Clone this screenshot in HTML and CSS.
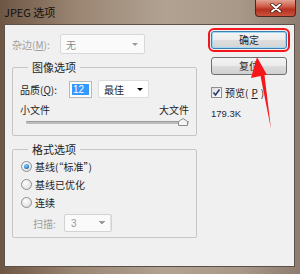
FILE: index.html
```html
<!DOCTYPE html>
<html lang="zh-CN">
<head>
    <meta charset="UTF-8">
    <meta name="viewport" content="width=device-width, initial-scale=1.0">
    <title>JPEG 选项</title>
    <link rel="stylesheet" href="styles.css">
</head>
<body>
    <div class="window">
        <!-- 标题栏 -->
        <div class="titlebar">
            <span class="title">JPEG 选项</span>
            <span class="close-btn">
                <svg width="12" height="10" viewBox="0 0 12 10"><path d="M2 1.5 L10 8.5 M10 1.5 L2 8.5" stroke="#3a1a14" stroke-width="3.4" stroke-linecap="round"/><path d="M2 1.5 L10 8.5 M10 1.5 L2 8.5" stroke="#ffffff" stroke-width="2" stroke-linecap="round"/></svg>
            </span>
        </div>

        <div class="client">
            <div class="left">
                <div class="row matte">
                    <label class="label disabled">杂边(<u>M</u>):</label>
                    <div class="combo combo-matte"><span>无</span><i class="arrow"></i></div>
                </div>

                <!-- 图像选项 -->
                <fieldset class="group">
                    <legend>图像选项</legend>
                    <div class="row quality">
                        <label class="label">品质(<u>Q</u>):</label>
                        <div class="num-input"><span class="sel">12</span></div>
                        <div class="combo combo-quality"><span>最佳</span><i class="arrow"></i></div>
                    </div>
                    <div class="size-labels"><span>小文件</span><span>大文件</span></div>
                    <div class="slider">
                        <div class="track"></div>
                        <svg class="thumb" width="10" height="8" viewBox="0 0 10 8"><path d="M0.5 7.5 L0.5 3.5 L5 0.5 L9.5 3.5 L9.5 7.5 Z" fill="#f4f4f4" stroke="#8c8c8c"/></svg>
                    </div>
                </fieldset>

                <!-- 格式选项 -->
                <fieldset class="group group-format">
                    <legend>格式选项</legend>
                    <div class="radio-row"><span class="radio checked"></span>基线(“标准”)</div>
                    <div class="radio-row"><span class="radio"></span>基线已优化</div>
                    <div class="radio-row"><span class="radio"></span>连续</div>
                    <div class="row scan">
                        <label class="label disabled">扫描:</label>
                        <div class="combo combo-scan"><span>3</span><i class="arrow"></i></div>
                    </div>
                </fieldset>
            </div>

            <div class="right">
                <div class="btn btn-ok">确定</div>
                <div class="btn">复位</div>
                <div class="check-row">
                    <span class="checkbox">
                        <svg width="9" height="9" viewBox="0 0 9 9"><path d="M1.5 4.5 L3.5 7 L7.5 1.5" fill="none" stroke="#253d73" stroke-width="1.6"/></svg>
                    </span>
                    预览(<u>P</u>)
                </div>
                <div class="size-info">179.3K</div>
            </div>
        </div>
    </div>

    <!-- 红色箭头标注 -->
    <svg class="mark-arrow" width="300" height="274" viewBox="0 0 300 274">
        <polygon points="257,57 267,75 264.5,75 271,129 260.5,76 251,78" fill="#f5171a"/>
    </svg>
</body>
</html>
```

FILE: styles.css
```css
* {
    margin: 0;
    padding: 0;
    box-sizing: border-box;
}

body {
    width: 300px;
    height: 274px;
    overflow: hidden;
    font-family: "Noto Sans CJK SC", "Liberation Sans", sans-serif;
    font-size: 10px;
    color: #1e1e1e;
}

u {
    text-decoration: underline;
}

/* 窗口外框 */

.window {
    height: 274px;
    display: flex;
    flex-direction: column;
    background: linear-gradient(90deg, #6e5644 0%, #9a8572 25%, #b1a292 55%, #a89888 80%, #8e7d70 100%);
}

.titlebar {
    height: 24px;
    display: flex;
    align-items: flex-start;
}

.title {
    padding: 4px 0 0 4px;
    font-size: 11px;
    line-height: 16px;
    color: #111;
}

.close-btn {
    margin-left: auto;
    margin-right: 4px;
    width: 41px;
    height: 17px;
    display: flex;
    align-items: center;
    justify-content: center;
    border: 1px solid #4e2720;
    border-top: none;
    border-radius: 0 0 4px 4px;
    background: linear-gradient(#e0a393 0%, #cf5d48 40%, #b6301f 60%, #c9533c 100%);
}

/* 客户区 */

.client {
    flex: 1;
    display: flex;
    margin: 0 5px 7px 4px;
    padding-left: 7px;
    background-color: #f0f0f0;
    border: 1px solid #5c5048;
}

.left {
    width: 185px;
    padding-top: 9px;
}

.right {
    width: 76px;
    margin-left: 14px;
    padding-top: 6px;
}

.row {
    display: flex;
    align-items: center;
}

.label {
    white-space: nowrap;
}

.disabled {
    color: #a0a0a0;
}

.matte {
    height: 20px;
}

.matte .label {
    width: 48px;
}

/* 下拉框 */

.combo {
    position: relative;
    display: flex;
    align-items: center;
    height: 20px;
    padding-left: 5px;
    background-color: #fff;
    border: 1px solid #d0d0d0;
    border-radius: 2px;
}

.combo .arrow {
    margin-left: auto;
    margin-right: 5px;
    width: 0;
    height: 0;
    border-left: 3px solid transparent;
    border-right: 3px solid transparent;
    border-top: 3px solid #000;
}

.combo-matte {
    width: 85px;
    color: #8a8a8a;
    background-color: #fafafa;
    border-color: #d8d8d8;
}

.combo-matte .arrow {
    border-top-color: #9a9a9a;
    margin-right: 6px;
}

/* 分组框 */

.group {
    margin-top: 5px;
    padding: 0 7px 9px 7px;
    border: 1px solid #c6c6c6;
    border-radius: 2px;
}

.group legend {
    margin-left: 8px;
    padding: 0 4px;
    font-size: 11px;
    line-height: 16px;
}

.quality {
    height: 18px;
    margin-top: 5px;
}

.quality .label {
    width: 49px;
}

.num-input {
    width: 23px;
    height: 17px;
    padding: 2px;
    background-color: #fff;
    border: 1px solid #b8b8b8;
}

.num-input .sel {
    display: block;
    height: 11px;
    padding-left: 1px;
    font-family: "Liberation Sans", sans-serif;
    font-size: 10px;
    line-height: 11px;
    color: #fff;
    background-color: #3399ff;
}

.combo-quality {
    width: 51px;
    height: 18px;
    margin-left: 6px;
    border-color: #dcdcdc;
}

.size-labels {
    display: flex;
    justify-content: space-between;
    margin-top: 5px;
    line-height: 14px;
}

.slider {
    position: relative;
    height: 8px;
    margin-top: 1px;
    padding: 3px 0 0 6px;
}

.track {
    height: 3px;
    background-color: #bcbcbc;
    border-top: 1px solid #9c9c9c;
    border-radius: 1px;
}

.thumb {
    position: absolute;
    right: 1px;
    top: 0;
}

/* 格式选项 */

.group-format {
    padding-bottom: 5px;
}

.radio-row {
    display: flex;
    align-items: center;
    gap: 3px;
    height: 18px;
}

.radio {
    width: 11px;
    height: 11px;
    margin-left: 1px;
    display: flex;
    align-items: center;
    justify-content: center;
    border: 1px solid #8f9090;
    border-radius: 50%;
    background: radial-gradient(circle at 40% 35%, #ffffff 0%, #e6e6e6 60%, #d4d4d4 100%);
}

.radio.checked::after {
    content: "";
    width: 5px;
    height: 5px;
    border-radius: 50%;
    background: radial-gradient(circle at 40% 35%, #8fd3ff 0%, #2c8ad6 55%, #124d8a 100%);
}

.scan {
    height: 18px;
    margin-top: 3px;
    padding-left: 13px;
}

.scan .label {
    width: 31px;
}

.combo-scan {
    width: 48px;
    height: 18px;
    padding-left: 6px;
    font-family: "Liberation Sans", sans-serif;
    color: #9a9a9a;
    background-color: #fafafa;
    border-color: #d2d2d2;
}

.combo-scan .arrow {
    margin-right: 0;
    width: 15px;
    height: 16px;
    border: none;
    border-left: 1px solid #e2e2e2;
    background: linear-gradient(to bottom right, transparent 50%, #9a9a9a 50%) 5px 7px / 3px 3px no-repeat,
                linear-gradient(to bottom left, transparent 50%, #9a9a9a 50%) 8px 7px / 3px 3px no-repeat;
    transform: rotate(180deg);
}

/* 右侧按钮 */

.btn {
    height: 18px;
    line-height: 16px;
    text-align: center;
    border: 1px solid #707070;
    border-radius: 3px;
    background: linear-gradient(#f3f3f3 0%, #ebebeb 48%, #dcdcdc 52%, #d0d0d0 100%);
}

.btn + .btn {
    margin-top: 8px;
}

.btn-ok {
    border-color: #3c7fb1;
    box-shadow: inset 0 0 0 1px #9fd8f4;
    background: linear-gradient(#f4f4f4 0%, #ececec 48%, #dedede 52%, #d3d3d3 100%);
    outline: 2px solid #f2161a;
    outline-offset: 1px;
}

.check-row {
    display: flex;
    align-items: center;
    gap: 3px;
    height: 14px;
    margin-top: 10px;
}

.checkbox {
    width: 11px;
    height: 11px;
    display: flex;
    align-items: center;
    justify-content: center;
    border: 1px solid #8f8f8f;
    background: linear-gradient(135deg, #dcdcdc, #ffffff);
}

.size-info {
    margin-top: 8px;
    font-family: "Liberation Sans", sans-serif;
    font-size: 9.5px;
    line-height: 14px;
    color: #1e2a3e;
}

/* 标注箭头 */

.mark-arrow {
    position: absolute;
    left: 0;
    top: 0;
    pointer-events: none;
}
```
